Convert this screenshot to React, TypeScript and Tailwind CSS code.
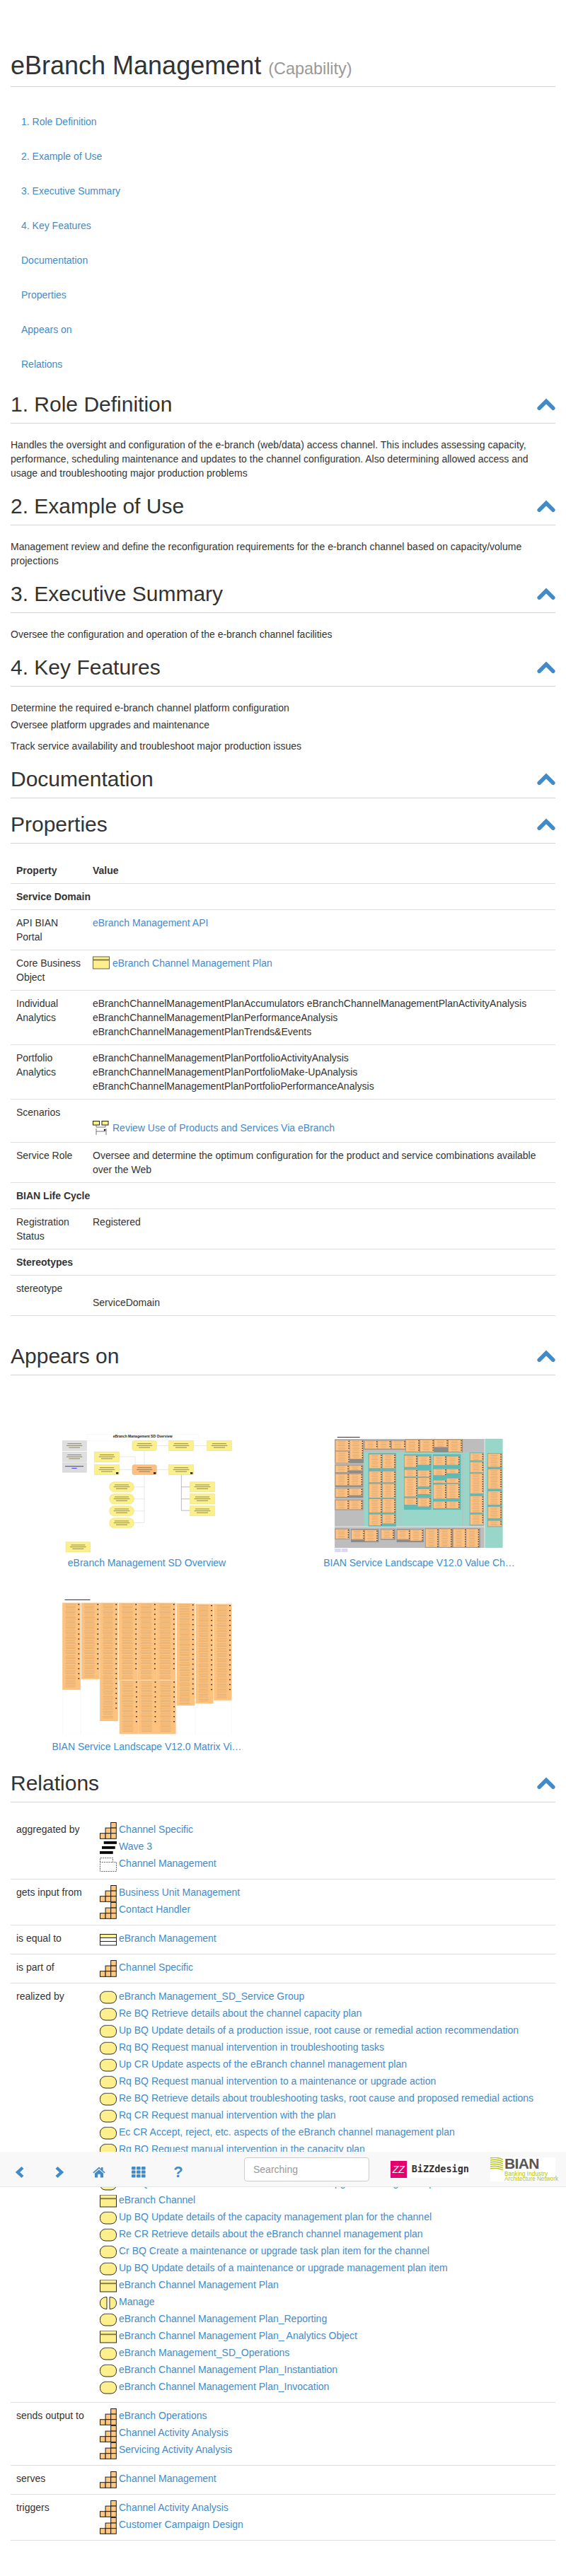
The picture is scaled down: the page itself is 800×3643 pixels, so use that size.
import React from "react";

const LINK = "text-[#428bca]";

function ChevronUp() {
  return (
    <svg width="26" height="18" viewBox="0 0 26 18" className="shrink-0">
      <polyline points="3.2,14.2 13,4.4 22.8,14.2" fill="none" stroke="#428bca" strokeWidth="5.6" strokeLinecap="round" strokeLinejoin="miter" />
    </svg>
  );
}

function H2({ children, className = "" }: { children: React.ReactNode; className?: string }) {
  return (
    <div className={`flex items-center justify-between border-b border-[#d4d4d4] pb-[10px] ${className}`}>
      <h2 className="text-[30px] leading-[33px] font-medium text-[#333]">{children}</h2>
      <ChevronUp />
    </div>
  );
}

function Capability() {
  const cells = [[2, 0], [1, 1], [2, 1], [0, 2], [1, 2], [2, 2]];
  return (
    <svg width="24" height="24" viewBox="0 0 24 24" className="shrink-0">
      {cells.map(([c, r]) => (
        <rect key={`${c}${r}`} x={0.5 + c * 7.6} y={0.5 + r * 7.6} width="7.6" height="7.6" fill="#ffc77f" stroke="#1c1c1c" strokeWidth="1" />
      ))}
    </svg>
  );
}
function Wave() {
  return (
    <svg width="24" height="24" viewBox="0 0 24 24" className="shrink-0">
      <rect x="5.7" y="3" width="18.3" height="3.8" fill="#000" />
      <rect x="3" y="10" width="18.7" height="3.8" fill="#000" />
      <rect x="0" y="17" width="18.7" height="3.8" fill="#000" />
    </svg>
  );
}
function Group() {
  return (
    <svg width="24" height="24" viewBox="0 0 24 24" className="shrink-0">
      <path d="M0.5 8.5V2.5H18.5V8.5H23.5V21.5H0.5V8.5H18.5" fill="#fff" stroke="#666" strokeWidth="1" strokeDasharray="2 1.2" />
    </svg>
  );
}
function ObjectIcon() {
  return (
    <svg width="24" height="24" viewBox="0 0 24 24" className="shrink-0">
      <rect x="0.5" y="3.5" width="23" height="16.5" fill="#fdf08c" stroke="#2a2a22" strokeWidth="1" />
      <rect x="0.5" y="3" width="23" height="1" fill="#8f8a68" />
      <rect x="0.5" y="7.4" width="23" height="1.8" fill="#77724f" />
    </svg>
  );
}
function Process() {
  return (
    <svg width="24" height="24" viewBox="0 0 24 24" className="shrink-0">
      <rect x="0.5" y="3.5" width="23" height="16.5" rx="7.5" ry="7.5" fill="#fdf08c" stroke="#2a2a22" strokeWidth="1" />
      <path d="M6 3.2H18" stroke="#8f8a68" strokeWidth="1" />
    </svg>
  );
}
function Equal() {
  return (
    <svg width="24" height="24" viewBox="0 0 24 24" className="shrink-0">
      <rect x="0.5" y="4.5" width="23" height="15.5" fill="#fff" stroke="#222" strokeWidth="1" />
      <rect x="1" y="5" width="22" height="4" fill="#fdf08c" />
      <path d="M0.5 9.5H23.5M0.5 14.5H23.5" stroke="#222" strokeWidth="1" />
    </svg>
  );
}
function Manage() {
  return (
    <svg width="24" height="24" viewBox="0 0 24 24" className="shrink-0">
      <path d="M10 3.6C4 3.6 0.5 7 0.5 12S4 20.4 10 20.4Z" fill="#fdf08c" stroke="#2a2a22" strokeWidth="1" />
      <path d="M14 3.6C20 3.6 23.5 7 23.5 12S20 20.4 14 20.4Z" fill="#fdf08c" stroke="#2a2a22" strokeWidth="1" />
    </svg>
  );
}
function ScenarioIcon() {
  return (
    <svg width="24" height="24" viewBox="0 0 24 24" className="shrink-0">
      <rect x="0.5" y="2.5" width="9" height="5.5" fill="#fdf08c" stroke="#222" strokeWidth="1" />
      <rect x="13" y="2.5" width="9" height="5.5" fill="#fdf08c" stroke="#222" strokeWidth="1" />
      <path d="M5 8V11H18M18 8V11M5 13V22M19 13V22M5 17H18" stroke="#555" strokeWidth="0.8" fill="none" />
      <circle cx="17" cy="15" r="1.3" fill="#111" />
    </svg>
  );
}
function SmallObject() {
  return (
    <svg width="24" height="20" viewBox="0 0 24 20" className="shrink-0">
      <rect x="0.5" y="1" width="23" height="17" fill="#fdf08c" stroke="#67644c" strokeWidth="1" />
      <rect x="0.5" y="4.6" width="23" height="1.8" fill="#77724f" />
    </svg>
  );
}

type IconName = "cap" | "wave" | "group" | "obj" | "proc" | "eq" | "man";
const ICONS: Record<IconName, () => React.ReactElement> = {
  cap: Capability,
  wave: Wave,
  group: Group,
  obj: ObjectIcon,
  proc: Process,
  eq: Equal,
  man: Manage,
};

function Item({ icon, text }: { icon: IconName; text: string }) {
  const I = ICONS[icon];
  return (
    <div className="flex h-[24px] items-start">
      <I />
      <a className={`ml-[3px] leading-[20px] whitespace-nowrap ${LINK}`}>{text}</a>
    </div>
  );
}

function Card({ x, y, w, h }: { x: number; y: number; w: number; h: number }) {
  const rows: number[] = [];
  for (let yy = y + 4; yy < y + h - 2; yy += 5) rows.push(yy);
  return (
    <g>
      <rect x={x} y={y} width={w} height={h} fill="#fdc183" stroke="#8f8f8f" strokeWidth="1" />
      {rows.map((yy, i) => (
        <rect key={yy} x={x + 10 + (i % 3) * 2} y={yy} width={w - 26 - (i % 3) * 4} height="1" fill="#a07c50" opacity="0.65" />
      ))}
      {rows.map((yy, i) =>
        i % 2 === 0 ? <rect key={`d${yy}`} x={x + w - 5} y={yy - 1} width="4" height="3.5" fill="#111" /> : null
      )}
    </g>
  );
}

function Box({ x, y, w, h, rx = 0, fill = "#fbf08c", stroke = "#e8dc6c" }: { x: number; y: number; w: number; h: number; rx?: number; fill?: string; stroke?: string }) {
  return (
    <g>
      <rect x={x} y={y} width={w} height={h} rx={rx} fill={fill} stroke={stroke} strokeWidth="1.5" />
      <rect x={x + 22} y={y + h / 2 - 10} width={w - 44} height="3" fill="#6d683d" opacity="0.75" />
      <rect x={x + 18} y={y + h / 2 - 2} width={w - 36} height="3" fill="#6d683d" opacity="0.75" />
      <rect x={x + 28} y={y + h / 2 + 6} width={w - 56} height="3" fill="#6d683d" opacity="0.75" />
    </g>
  );
}

function OverviewDiagram() {
  const yellow = [
    [382, 113, 103, 42, 8], [537, 113, 104, 42, 0], [699, 113, 104, 42, 0],
    [222, 160, 104, 43, 0], [222, 215, 104, 42, 0], [537, 215, 104, 42, 0],
    [627, 288, 104, 42, 0], [627, 339, 104, 42, 0], [627, 390, 104, 42, 0],
    [100, 543, 104, 42, 0],
    [285, 288, 104, 42, 20], [285, 339, 104, 42, 20], [285, 390, 104, 42, 20], [285, 441, 104, 42, 20],
  ];
  return (
    <svg width="240" height="167" viewBox="85 85 720 500" className="block">
      <rect x="190" y="85" width="472" height="27" fill="#fff" stroke="#eee" />
      <text x="426" y="100" textAnchor="middle" fontSize="15" fontWeight="700" fontFamily="Liberation Sans" fill="#222">eBranch Management SD Overview</text>
      <g fill="none" stroke="#bbb" strokeWidth="1.5" strokeDasharray="4 2">
        <path d="M326 181H394V215M433 155V215M485 134H537M641 134H699M326 236H382M485 236H537" />
        <path d="M433 257V461H389M389 309H433M389 360H433M389 411H433" />
      </g>
      <path d="M590 257V409H627M590 309H627M590 360H627" fill="none" stroke="#999" strokeWidth="2" />
      {[[85, 113, 103, 42], [85, 160, 103, 43]].map(([x, y, w, h]) => (
        <Box key={y} x={x} y={y} w={w} h={h} fill="#dfdfdf" stroke="#cfcfcf" />
      ))}
      <rect x="85" y="207" width="103" height="40" fill="#dcdcdc" stroke="#cfcfcf" strokeWidth="1.5" />
      <rect x="97" y="220" width="78" height="3" fill="#3a3af0" />
      <rect x="125" y="228" width="22" height="3" fill="#3a3af0" />
      {yellow.map(([x, y, w, h, r]) => (
        <Box key={`${x}-${y}`} x={x} y={y} w={w} h={h} rx={r} />
      ))}
      <Box x={382} y={215} w={103} h={42} rx={8} fill="#fdbf80" stroke="#eeb070" />
      <rect x="313" y="247" width="10" height="7" fill="#111" />
      <rect x="472" y="247" width="10" height="7" fill="#111" />
      <rect x="628" y="247" width="10" height="7" fill="#111" />
    </svg>
  );
}

function LandscapeDiagram() {
  const cards = [
    [42, 50, 60, 45], [103, 50, 57, 80], [42, 97, 60, 50], [42, 157, 57, 30], [100, 157, 57, 22],
    [42, 193, 57, 50], [100, 193, 57, 50], [42, 255, 57, 37], [100, 255, 57, 30], [42, 305, 57, 40], [100, 305, 57, 40],
    [166, 52, 55, 35], [222, 52, 55, 35], [281, 52, 58, 35], [341, 48, 58, 52], [402, 48, 58, 52], [462, 48, 58, 32], [522, 48, 58, 52],
    [185, 110, 55, 60], [242, 110, 55, 60], [185, 182, 55, 48], [242, 182, 55, 48], [185, 235, 55, 60], [242, 235, 55, 60],
    [185, 300, 55, 58], [242, 300, 55, 58], [185, 365, 55, 48], [242, 365, 55, 40],
    [335, 115, 55, 50], [392, 118, 55, 38], [335, 175, 55, 30], [392, 178, 55, 28], [335, 210, 55, 80], [392, 210, 55, 38],
    [392, 258, 55, 22], [335, 295, 55, 30], [392, 295, 55, 38],
    [458, 117, 55, 40], [515, 118, 55, 38], [458, 172, 55, 28], [515, 172, 55, 20], [458, 220, 55, 12], [515, 212, 55, 20],
    [458, 238, 55, 62], [515, 236, 55, 62], [458, 310, 55, 30], [515, 310, 55, 30],
    [614, 105, 57, 32], [614, 142, 57, 45], [614, 192, 57, 85], [614, 287, 57, 72], [614, 365, 57, 45],
    [690, 107, 58, 58], [690, 173, 58, 85], [690, 267, 58, 58], [690, 333, 58, 50], [690, 392, 58, 25],
    [42, 428, 58, 42], [110, 432, 55, 40], [167, 432, 55, 48], [236, 430, 55, 40], [304, 432, 55, 40], [360, 430, 55, 48],
    [425, 427, 55, 78], [482, 427, 55, 78], [542, 427, 55, 78], [598, 427, 55, 78],
  ];
  const darks = [
    [40, 48, 122, 100], [40, 155, 120, 36], [40, 191, 120, 58], [40, 253, 120, 42], [40, 303, 120, 44],
    [164, 50, 176, 40], [339, 46, 244, 56], [40, 426, 62, 46], [108, 428, 118, 56], [234, 428, 62, 46], [302, 428, 115, 56], [423, 425, 234, 82],
  ];
  const teals = [[182, 105, 118, 312], [333, 110, 117, 236], [456, 110, 119, 236], [612, 103, 60, 310], [688, 105, 62, 314]];
  return (
    <svg width="239" height="165" viewBox="39 30 718 496" className="block">
      <rect x="50" y="36" width="96" height="3" fill="#333" />
      <rect x="39" y="45" width="636" height="463" fill="#bdbdbd" />
      <rect x="678" y="45" width="74" height="462" fill="#97d6c8" stroke="#7cc7b7" />
      <rect x="163" y="100" width="155" height="317" fill="#97d6c8" />
      <rect x="320" y="100" width="262" height="317" fill="#97d6c8" />
      <rect x="585" y="100" width="87" height="315" fill="#97d6c8" />
      <rect x="39" y="417" width="636" height="2" fill="#fff" />
      {darks.map(([x, y, w, h]) => <rect key={`${x}-${y}`} x={x} y={y} width={w} height={h} fill="#8c8c8c" />)}
      {teals.map(([x, y, w, h]) => <rect key={`${x}-${y}`} x={x} y={y} width={w} height={h} fill="#5fb9b5" />)}
      {cards.map(([x, y, w, h]) => <Card key={`${x}-${y}`} x={x} y={y} w={w} h={h} />)}
      <rect x="39" y="511" width="26" height="15" fill="#dcd8f0" />
      <rect x="68" y="511" width="26" height="15" fill="#dcd8f0" />
    </svg>
  );
}

function MatrixDiagram() {
  const cols = [
    [85, 50, 77, 370, 1], [165, 50, 78, 325, 1], [244, 50, 77, 503, 1], [325, 50, 80, 330, 1], [405, 50, 80, 330, 1], [485, 50, 81, 330, 1],
    [327, 380, 80, 228, 1], [407, 380, 80, 228, 1], [487, 380, 80, 228, 1], [570, 52, 77, 435, 1], [651, 55, 75, 423, 1], [728, 55, 76, 410, 1],
  ];
  const outlines = [[85, 50, 77, 560], [165, 50, 156, 560], [651, 55, 153, 555], [570, 52, 77, 558]];
  return (
    <svg width="240" height="192" viewBox="85 33 720 577" className="block">
      <rect x="95" y="36" width="108" height="3" fill="#333" />
      {outlines.map(([x, y, w, h]) => <rect key={x} x={x} y={y} width={w} height={h} fill="none" stroke="#f0f0f0" />)}
      {cols.map(([x, y, w, h]) => {
        const rows: number[] = [];
        for (let yy = y + 6; yy < y + h - 8; yy += 7) rows.push(yy);
        return (
          <g key={`${x}-${y}`}>
            <rect x={x} y={y} width={w} height={h} fill="#fec27f" />
            {rows.map((yy, i) => (
              <rect key={yy} x={x + 12 + (i % 4)} y={yy} width={w - 32 - (i % 4) * 2} height="1.4" fill="#9c7a52" opacity="0.6" />
            ))}
            {rows.map((yy, i) =>
              i % 3 === 0 && yy < y + h - 40 ? <rect key={`d${yy}`} x={x + w - 10} y={yy - 1} width="5" height="4" fill="#111" /> : null
            )}
          </g>
        );
      })}
    </svg>
  );
}

function Tile({ label, gap, children }: { label: string; gap: string; children: React.ReactNode }) {
  return (
    <div className="flex flex-col items-center">
      {children}
      <a className={`${gap} leading-[20px] whitespace-nowrap ${LINK}`}>{label}</a>
    </div>
  );
}

const TOC = ["1. Role Definition", "2. Example of Use", "3. Executive Summary", "4. Key Features", "Documentation", "Properties", "Appears on", "Relations"];

const realized: [IconName, string][] = [
  ["proc", "eBranch Management_SD_Service Group"],
  ["proc", "Re BQ Retrieve details about the channel capacity plan"],
  ["proc", "Up BQ Update details of a production issue, root cause or remedial action recommendation"],
  ["proc", "Rq BQ Request manual intervention in troubleshooting tasks"],
  ["proc", "Up CR Update aspects of the eBranch channel management plan"],
  ["proc", "Rq BQ Request manual intervention to a maintenance or upgrade action"],
  ["proc", "Re BQ Retrieve details about troubleshooting tasks, root cause and proposed remedial actions"],
  ["proc", "Rq CR Request manual intervention with the plan"],
  ["proc", "Ec CR Accept, reject, etc. aspects of the eBranch channel management plan"],
  ["proc", "Rq BQ Request manual intervention in the capacity plan"],
  ["proc", "Cr BQ Create a capacity management plan item"],
  ["proc", "Re BQ Retrieve details about a maintenance or upgrade management plan item"],
  ["obj", "eBranch Channel"],
  ["proc", "Up BQ Update details of the capacity management plan for the channel"],
  ["proc", "Re CR Retrieve details about the eBranch channel management plan"],
  ["proc", "Cr BQ Create a maintenance or upgrade task plan item for the channel"],
  ["proc", "Up BQ Update details of a maintenance or upgrade management plan item"],
  ["obj", "eBranch Channel Management Plan"],
  ["man", "Manage"],
  ["proc", "eBranch Channel Management Plan_Reporting"],
  ["obj", "eBranch Channel Management Plan_ Analytics Object"],
  ["proc", "eBranch Management_SD_Operations"],
  ["proc", "eBranch Channel Management Plan_Instantiation"],
  ["proc", "eBranch Channel Management Plan_Invocation"],
];

const relations: [string, [IconName, string][]][] = [
  ["aggregated by", [["cap", "Channel Specific"], ["wave", "Wave 3"], ["group", "Channel Management"]]],
  ["gets input from", [["cap", "Business Unit Management"], ["cap", "Contact Handler"]]],
  ["is equal to", [["eq", "eBranch Management"]]],
  ["is part of", [["cap", "Channel Specific"]]],
  ["realized by", realized],
  ["sends output to", [["cap", "eBranch Operations"], ["cap", "Channel Activity Analysis"], ["cap", "Servicing Activity Analysis"]]],
  ["serves", [["cap", "Channel Management"]]],
  ["triggers", [["cap", "Channel Activity Analysis"], ["cap", "Customer Campaign Design"]]],
];

function BottomBar() {
  return (
    <div className="absolute left-0 right-0 top-[3043px] flex h-[50px] items-start border-b border-[#e7e7e7] bg-[#f8f8f8]">
      <div className="flex h-[42px] w-[56px] items-center justify-center mt-2">
        <svg width="14" height="18" viewBox="0 0 14 18"><polyline points="11,2.5 4,9 11,15.5" fill="none" stroke="#428bca" strokeWidth="4.4" /></svg>
      </div>
      <div className="flex h-[42px] w-[56px] items-center justify-center mt-2">
        <svg width="14" height="18" viewBox="0 0 14 18"><polyline points="3,2.5 10,9 3,15.5" fill="none" stroke="#428bca" strokeWidth="4.4" /></svg>
      </div>
      <div className="flex h-[42px] w-[56px] items-center justify-center mt-2">
        <svg width="18" height="16" viewBox="0 0 18 16"><path d="M9 0.5L0.3 8.2L1.4 9.4L9 2.8L16.6 9.4L17.7 8.2L14.5 5.4V1H12V3.2ZM9 4.2L3 9.4V15.5H7.2V10.8H10.8V15.5H15V9.4Z" fill="#428bca" /></svg>
      </div>
      <div className="flex h-[42px] w-[56px] items-center justify-center mt-2">
        <svg width="20" height="16" viewBox="0 0 20 16" fill="#428bca">
          {[0, 7, 14].map((x) => [0, 5.5, 11].map((y) => <rect key={`${x}${y}`} x={x} y={y} width="5.6" height="4.6" rx="1" />))}
        </svg>
      </div>
      <div className="flex h-[42px] w-[56px] items-center justify-center mt-2 text-[22px] leading-[22px] font-bold text-[#428bca]">?</div>
      <input
        placeholder="Searching"
        readOnly
        className="ml-[65px] mt-2 h-[34px] w-[177px] rounded-[4px] border border-[#ccc] bg-white px-3 text-[14px] text-[#555] placeholder:text-[#999]"
      />
      <div className="ml-[30px] mt-[13px] flex h-[24px] w-[111px] items-center bg-white">
        <div className="flex h-[24px] w-[23px] items-center justify-center bg-[#e6006e] text-[14px] italic leading-none text-white">ZZ</div>
        <span className="ml-[7px] font-['DejaVu_Sans_Mono',monospace] text-[13.5px] font-bold leading-none tracking-[0] text-[#333]">BiZZdesign</span>
      </div>
      <div className="ml-[30px] mt-2 h-[34px] w-[92px] bg-white">
        <div className="flex h-[18px] items-start">
          <svg width="18" height="18" viewBox="0 0 18 18" className="shrink-0">
            {[1, 4, 7, 10, 13, 16].map((y) => (
              <path key={y} d={`M0 ${y}C6 ${y - 1.5} 12 ${y - 1} 18 ${y + 2}`} fill="none" stroke="#b6c61e" strokeWidth="1.5" />
            ))}
          </svg>
          <span className="ml-[2px] text-[21px] leading-[18px] font-bold tracking-[-0.6px] text-[#55565a]">BIAN</span>
        </div>
        <div className="ml-[20px] mt-[2px] whitespace-nowrap text-[8.2px] leading-[7.4px] text-[#b5c400]">
          <div>Banking Industry</div>
          <div>Architecture Network</div>
        </div>
      </div>
    </div>
  );
}

export default function App() {
  const tdL = "px-2 py-2 align-top";
  const tr = "border-b border-[#ddd]";
  return (
    <div className="relative min-h-[3643px] bg-white px-[15px] pb-[50px] font-['Liberation_Sans',Arial,sans-serif] text-[14px] leading-[20px] text-[#333]">
      <div className="border-b border-[#d4d4d4] pt-[73px] pb-[9px]">
        <h1 className="text-[36px] leading-[40px] font-medium text-[#333]">
          eBranch Management <small className="text-[23.4px] leading-none font-normal text-[#999]">(Capability)</small>
        </h1>
      </div>

      <nav className="mt-[39px] flex flex-col gap-[29px] pl-[15px]">
        {TOC.map((t) => <a key={t} className={LINK}>{t}</a>)}
      </nav>

      <H2 className="mt-[30px]">1. Role Definition</H2>
      <p className="mt-5">Handles the oversight and configuration of the e-branch (web/data) access channel. This includes assessing capacity, performance, scheduling maintenance and updates to the channel configuration. Also determining allowed access and usage and troubleshooting major production problems</p>

      <H2 className="mt-5">2. Example of Use</H2>
      <p className="mt-5">Management review and define the reconfiguration requirements for the e-branch channel based on capacity/volume projections</p>

      <H2 className="mt-5">3. Executive Summary</H2>
      <p className="mt-5">Oversee the configuration and operation of the e-branch channel facilities</p>

      <H2 className="mt-5">4. Key Features</H2>
      <p className="mt-5">Determine the required e-branch channel platform configuration</p>
      <p className="mt-1">Oversee platform upgrades and maintenance</p>
      <p className="mt-[10px]">Track service availability and troubleshoot major production issues</p>

      <H2 className="mt-5">Documentation</H2>
      <H2 className="mt-5">Properties</H2>

      <table className="mt-5 w-full table-fixed border-collapse">
        <colgroup><col className="w-[108px]" /><col /></colgroup>
        <tbody>
          <tr className={tr}><th className={`${tdL} text-left font-bold`}>Property</th><th className={`${tdL} text-left font-bold`}>Value</th></tr>
          <tr className={tr}><td colSpan={2} className={`${tdL} font-bold`}>Service Domain</td></tr>
          <tr className={tr}><td className={tdL}>API BIAN Portal</td><td className={tdL}><a className={LINK}>eBranch Management API</a></td></tr>
          <tr className={tr}>
            <td className={tdL}>Core Business Object</td>
            <td className={tdL}><div className="flex items-start"><SmallObject /><a className={`ml-1 ${LINK}`}>eBranch Channel Management Plan</a></div></td>
          </tr>
          <tr className={tr}><td className={tdL}>Individual Analytics</td><td className={tdL}>eBranchChannelManagementPlanAccumulators eBranchChannelManagementPlanActivityAnalysis eBranchChannelManagementPlanPerformanceAnalysis eBranchChannelManagementPlanTrends&amp;Events</td></tr>
          <tr className={tr}><td className={tdL}>Portfolio Analytics</td><td className={tdL}>eBranchChannelManagementPlanPortfolioActivityAnalysis eBranchChannelManagementPlanPortfolioMake-UpAnalysis eBranchChannelManagementPlanPortfolioPerformanceAnalysis</td></tr>
          <tr className={tr}>
            <td className={tdL}>Scenarios</td>
            <td className={`${tdL} !pt-7`}><div className="flex h-[24px] items-start"><ScenarioIcon /><a className={`ml-1 leading-[24px] ${LINK}`}>Review Use of Products and Services Via eBranch</a></div></td>
          </tr>
          <tr className={tr}><td className={tdL}>Service Role</td><td className={tdL}>Oversee and determine the optimum configuration for the product and service combinations available over the Web</td></tr>
          <tr className={tr}><td colSpan={2} className={`${tdL} font-bold`}>BIAN Life Cycle</td></tr>
          <tr className={tr}><td className={tdL}>Registration Status</td><td className={tdL}>Registered</td></tr>
          <tr className={tr}><td colSpan={2} className={`${tdL} font-bold`}>Stereotypes</td></tr>
          <tr className={tr}><td className={tdL}>stereotype</td><td className={`${tdL} !pt-7`}>ServiceDomain</td></tr>
        </tbody>
      </table>

      <H2 className="mt-10">Appears on</H2>
      <div className="mt-[83px] grid grid-cols-2 gap-y-[41px]">
        <Tile label="eBranch Management SD Overview" gap="mt-[5px]"><OverviewDiagram /></Tile>
        <div className="flex flex-col justify-end"><Tile label="BIAN Service Landscape V12.0 Value Ch…" gap="mt-[5px]"><LandscapeDiagram /></Tile></div>
        <Tile label="BIAN Service Landscape V12.0 Matrix Vi…" gap="mt-[7px]"><MatrixDiagram /></Tile>
      </div>

      <H2 className="mt-[25px]">Relations</H2>
      <table className="mt-5 w-full table-fixed border-collapse">
        <colgroup><col className="w-[118px]" /><col /></colgroup>
        <tbody>
          {relations.map(([label, items]) => (
            <tr key={label} className={tr}>
              <td className={tdL}>{label}</td>
              <td className={tdL}>
                {items.map(([icon, text], i) => <Item key={`${text}${i}`} icon={icon} text={text} />)}
              </td>
            </tr>
          ))}
        </tbody>
      </table>

      <BottomBar />
    </div>
  );
}
